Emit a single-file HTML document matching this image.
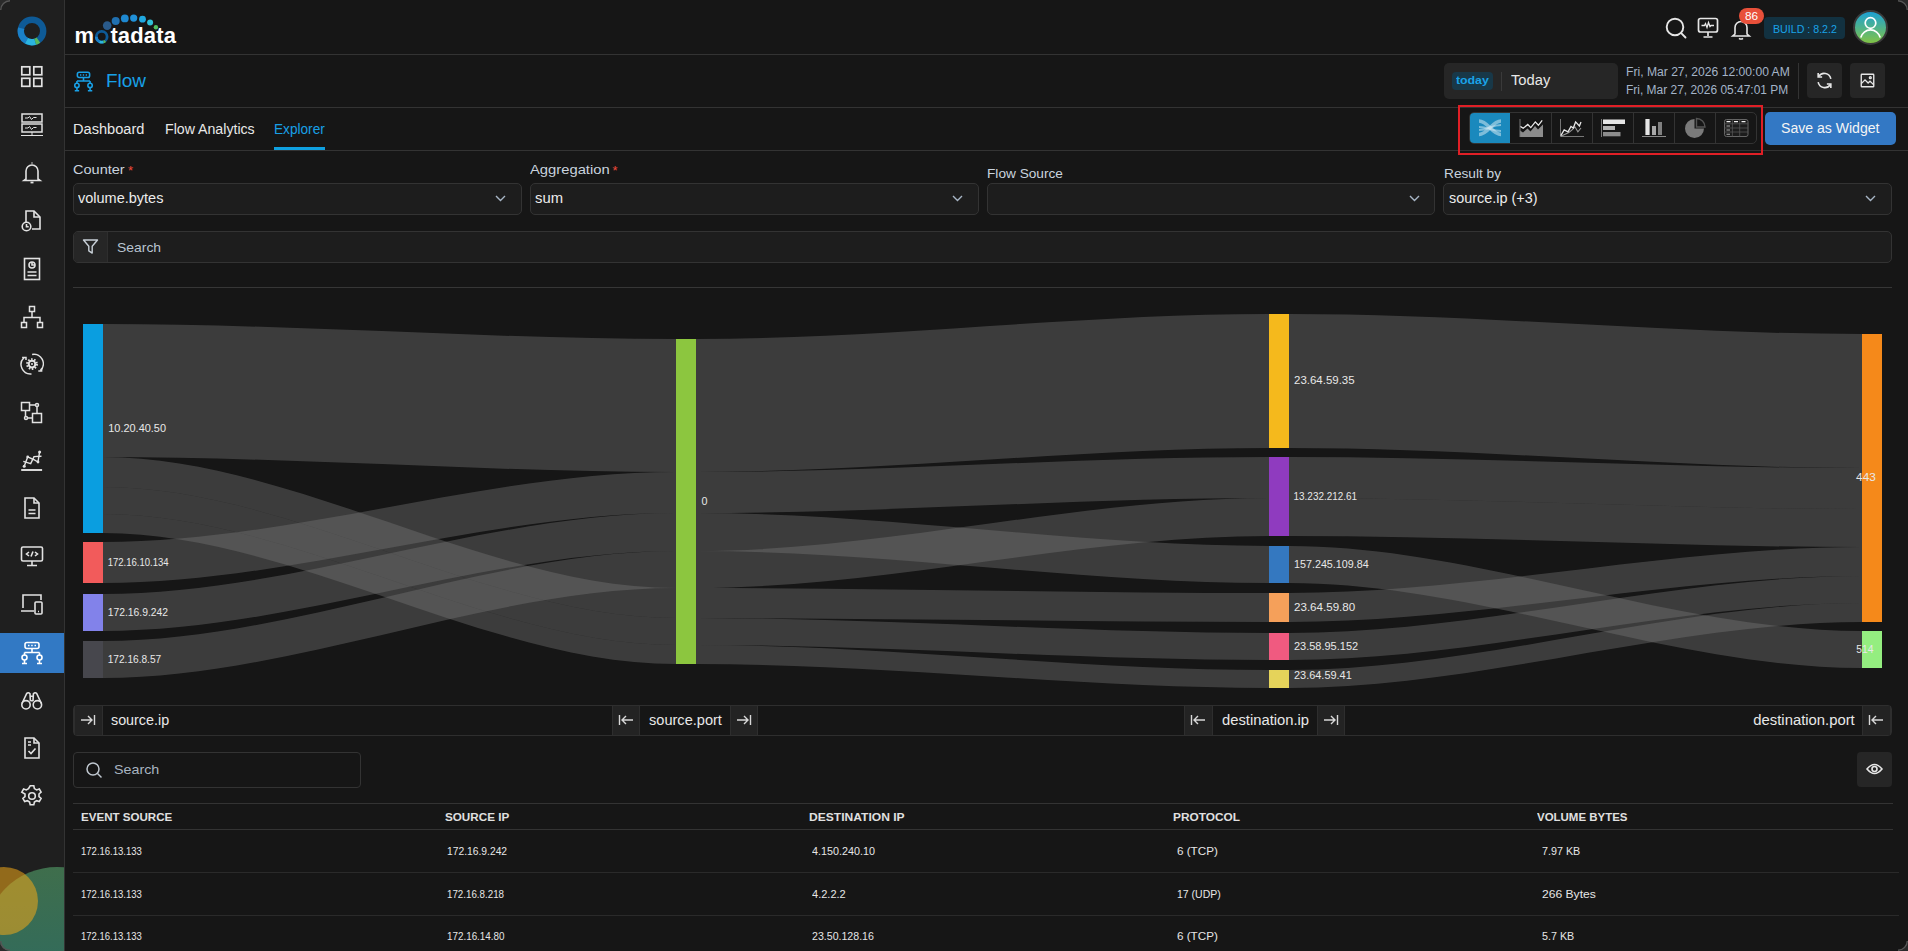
<!DOCTYPE html>
<html><head><meta charset="utf-8">
<style>
*{box-sizing:border-box;margin:0;padding:0}
html,body{width:1908px;height:951px;overflow:hidden;background:#161616;font-family:"Liberation Sans",sans-serif;color:#e4e4e4}
.a{position:absolute}
#side{left:0;top:0;width:65px;height:951px;background:#1f1f1f;border-right:1px solid #333;overflow:hidden}
.ic{position:absolute;left:20px;width:24px;height:24px}
.ic svg{width:24px;height:24px;display:block}
.t{position:absolute;white-space:nowrap;line-height:1}
</style></head><body>
<div id="side" class="a">
<svg class="a" style="left:17px;top:16px" width="30" height="30" viewBox="0 0 30 30">
<g fill="none" stroke-width="6.4">
<circle cx="15" cy="15" r="11.2" stroke="#0e5a96"/>
<path d="M4.2 12.2 A11.2 11.2 0 0 0 9.5 24.8" stroke="#1b80c8"/>
<path d="M9.5 24.8 A11.2 11.2 0 0 0 18.2 25.7" stroke="#2bb5e0"/>
<path d="M18.2 25.7 A11.2 11.2 0 0 0 21.4 24.2" stroke="#58b85c"/>
</g></svg>
<div class="ic" style="top:65px"><svg viewBox="0 0 24 24" fill="none" stroke="#e2e2e2" stroke-width="1.7"><rect x="1.8" y="1.8" width="8" height="8"/><rect x="13.8" y="1.8" width="8" height="8"/><rect x="1.8" y="13.3" width="8" height="8"/><rect x="13.8" y="13.3" width="8" height="8"/></svg></div>
<div class="ic" style="top:113px"><svg viewBox="0 0 24 24" fill="none" stroke="#e2e2e2" stroke-width="1.5"><rect x="2" y="1" width="20" height="8"/><rect x="2" y="11" width="20" height="8"/><path d="M12 19v3M1 22.5h22M5 5h3l1.5-1.5 2 3 2-2h3M5 15h3l1.5-1.5 2 3 2-2h3" stroke-width="1"/></svg></div>
<div class="ic" style="top:160px"><svg viewBox="0 0 24 24" fill="none" stroke="#e2e2e2" stroke-width="1.6"><path d="M12 2.5v1M6 19V11a6 6 0 0 1 12 0v8l2 1.5H4L6 19z"/><path d="M10.5 22.5h3" stroke-width="1.8"/></svg></div>
<div class="ic" style="top:208px"><svg viewBox="0 0 24 24" fill="none" stroke="#e2e2e2" stroke-width="1.6"><path d="M6 14V3h8l6 6v12h-8"/><path d="M14 3v6h6"/><circle cx="6.5" cy="18.5" r="4.3"/><path d="M6.5 16v2.8h2.2"/></svg></div>
<div class="ic" style="top:257px"><svg viewBox="0 0 24 24" fill="none" stroke="#e2e2e2" stroke-width="1.6"><rect x="4.5" y="1.5" width="15" height="21"/><circle cx="12" cy="8" r="3"/><path d="M12 5v3h3M7.5 15h9M7.5 18.5h9"/></svg></div>
<div class="ic" style="top:305px"><svg viewBox="0 0 24 24" fill="none" stroke="#e2e2e2" stroke-width="1.5"><rect x="9.5" y="1.5" width="5" height="5"/><rect x="1.5" y="17.5" width="5" height="5"/><rect x="17.5" y="17.5" width="5" height="5"/><path d="M12 6.5v6M4 17.5V12.5h16v5"/></svg></div>
<div class="ic" style="top:352px"><svg viewBox="0 0 24 24" fill="none" stroke="#e2e2e2"><circle cx="12" cy="12.1" r="4.9" stroke-width="2" stroke-dasharray="1.55 1.53"/><circle cx="12" cy="12.1" r="3.3" stroke-width="2"/><circle cx="12" cy="12.1" r="1" fill="#e2e2e2" stroke="none"/><path d="M11.5 21.9A9.5 9.5 0 0 1 3.9 5.7M12.1 2.4A9.5 9.5 0 0 1 20.4 18.6" stroke-width="1.5"/><path d="M2.1 5.5h3.9v2.4M18.3 19h3.3v-2.4" stroke-width="1.5"/></svg></div>
<div class="ic" style="top:401px"><svg viewBox="0 0 24 24" fill="none" stroke="#e2e2e2" stroke-width="1.5"><rect x="1.5" y="1.5" width="8" height="8"/><rect x="12.5" y="12.5" width="9" height="9"/><circle cx="17" cy="4" r="1.5"/><circle cx="6" cy="17" r="1.5"/><path d="M9.5 4h6M17 5.5v7M5.5 9.5v6M7.5 17h5"/></svg></div>
<div class="ic" style="top:448px"><svg viewBox="0 0 24 24" fill="none" stroke="#e2e2e2" stroke-width="1.4"><path d="M1.2 22h20.9" stroke-width="1.9"/><path d="M3.3 13.3l7.4 2.3 3.3-7 7.5-.3"/><path d="M4.2 18.3l3.5-9.4 5.8 2.6 4.5 2.5 1.6-10.1"/><g fill="#e2e2e2" stroke="none"><circle cx="4.2" cy="18.3" r="1.5"/><circle cx="7.7" cy="8.9" r="1.4"/><circle cx="18" cy="14" r="1.4"/><circle cx="19.6" cy="3.9" r="1.5"/></g></svg></div>
<div class="ic" style="top:496px"><svg viewBox="0 0 24 24" fill="none" stroke="#e2e2e2" stroke-width="1.6"><path d="M5 2h9l5 5v15H5z"/><path d="M14 2v5h5M8.5 14h7M8.5 17.5h7"/></svg></div>
<div class="ic" style="top:544px"><svg viewBox="0 0 24 24" fill="none" stroke="#e2e2e2" stroke-width="1.6"><rect x="1.5" y="3" width="21" height="14" rx="1.5"/><path d="M12 17v4M7 21.5h10M9 8l-2.5 2L9 12M15 8l2.5 2L15 12M13 7.5l-2 5"/></svg></div>
<div class="ic" style="top:592px"><svg viewBox="0 0 24 24" fill="none" stroke="#e2e2e2" stroke-width="1.6"><path d="M3 16V3h18v5M1 19h13"/><rect x="15" y="10" width="7" height="12" rx="1"/><path d="M18 19.5h1"/></svg></div>
<div class="a" style="left:0;top:633px;width:64px;height:40px;background:#3279c4"></div>
<div class="ic" style="top:641px"><svg viewBox="0 0 24 24" fill="none" stroke="#ffffff" stroke-width="1.6"><rect x="5" y="1.5" width="14" height="6" rx="2"/><path d="M8 4.5h1.5M11.2 4.5h1.5M14.5 4.5h1.5M12 7.5v4M4.5 11.5h15M4.5 11.5v3M19.5 11.5v3"/><circle cx="4.5" cy="16.5" r="2.5"/><circle cx="19.5" cy="16.5" r="2.5"/><path d="M4.5 19v3M2 22.5h5M19.5 19v3M17 22.5h5"/></svg></div>
<div class="ic" style="top:688px"><svg viewBox="0 0 24 24" fill="none" stroke="#e2e2e2" stroke-width="1.6"><circle cx="6" cy="16.8" r="4.2"/><circle cx="17.4" cy="16.8" r="4.2"/><path d="M2 15.5L6.6 5.6q1.6-1.8 3.4 0.2L10.4 13M21.4 15.5L16.8 5.6q-1.6-1.8-3.4 0.2L13 13M10.3 8.3h2.8M10.3 12.7h2.8"/></svg></div>
<div class="ic" style="top:736px"><svg viewBox="0 0 24 24" fill="none" stroke="#e2e2e2" stroke-width="1.6"><path d="M5 2h9l5 5v15H5z"/><path d="M14 2v5h5M8 6h3M8 9h3M8.5 15l2.5 2.5 4.5-5"/></svg></div>
<div class="ic" style="top:784px"><svg viewBox="0 0 24 24" fill="none" stroke="#e2e2e2" stroke-width="1.6"><circle cx="12" cy="12" r="3.3"/><path d="M10.2 1.8h3.6l.6 2.8 2.2 1.3 2.7-.9 1.8 3.1-2.1 1.9v2.6l2.1 1.9-1.8 3.1-2.7-.9-2.2 1.3-.6 2.8h-3.6l-.6-2.8-2.2-1.3-2.7.9-1.8-3.1 2.1-1.9v-2.6L1.8 8.1l1.8-3.1 2.7.9 2.2-1.3z"/></svg></div>
<svg class="a" style="left:0;top:840px" width="64" height="111" viewBox="0 0 64 111">
<defs><linearGradient id="gg" x1="0" y1="0" x2="0" y2="1"><stop offset="0" stop-color="#3f6e4c"/><stop offset="1" stop-color="#2c6a62"/></linearGradient></defs>
<circle cx="57" cy="100" r="73" fill="url(#gg)"/>
<circle cx="4" cy="61" r="34" fill="#f0a818" fill-opacity="0.55"/>
</svg>
</div>
<div class="a" style="left:65px;top:54px;width:1843px;height:1px;background:#333"></div>
<div class="a" style="left:65px;top:107px;width:1843px;height:1px;background:#333"></div>
<div class="a" style="left:65px;top:150px;width:1843px;height:1px;background:#333"></div>
<svg class="a" style="left:70px;top:8px" width="110" height="40" viewBox="70 8 110 40">
<circle cx="107.2" cy="25.6" r="4.3" fill="#2a5a8a"/><circle cx="115.7" cy="21" r="4" fill="#2070b0"/>
<circle cx="124.8" cy="18.4" r="3.9" fill="#1e88d0"/><circle cx="133.7" cy="18.1" r="3.6" fill="#2090d8"/>
<circle cx="142.5" cy="19.2" r="3.4" fill="#20a8e0"/><circle cx="150.1" cy="22.4" r="3.0" fill="#30c0d8"/>
<circle cx="155.9" cy="27.3" r="2.2" fill="#50c060"/>
<g fill="none" stroke-width="2.8"><circle cx="101.7" cy="36.8" r="5.4" stroke="#0e5a96"/>
<path d="M96.3 36.8 A5.4 5.4 0 0 0 99.5 41.7" stroke="#1b80c8"/><path d="M99.5 41.7 A5.4 5.4 0 0 0 103.5 41.9" stroke="#2bb5e0"/><path d="M103.5 41.9 A5.4 5.4 0 0 0 105.2 41" stroke="#58b85c"/></g>
</svg>
<div class="t" style="left:74.6px;top:24.68px;font-size:22px;color:#ffffff;font-weight:bold;transform:scaleY(1.03);transform-origin:0 85%">m</div>
<div class="t" style="left:110.4px;top:24.68px;font-size:22px;color:#ffffff;font-weight:bold;letter-spacing:0.15px;transform:scaleY(1.03);transform-origin:0 85%">tadata</div>
<svg class="a" style="left:1664px;top:16px" width="24" height="24" viewBox="0 0 24 24" fill="none" stroke="#e6e6e6" stroke-width="1.9"><circle cx="11" cy="11" r="8.3"/><path d="M17.2 17.2l4.3 4.3" stroke-linecap="round"/></svg>
<svg class="a" style="left:1697px;top:17px" width="24" height="22" viewBox="0 0 24 22" fill="none" stroke="#e6e6e6" stroke-width="1.7"><rect x="1.5" y="1.5" width="19" height="13.5" rx="2"/><path d="M11 15v4M6.5 20h9"/><path d="M4.5 8.5h3l1-2 1.5 4 1.5-5 1.5 4 1-1h3" stroke-width="1.3"/></svg>
<svg class="a" style="left:1729px;top:16px" width="24" height="24" viewBox="0 0 24 24" fill="none" stroke="#e6e6e6" stroke-width="1.6"><path d="M6 18V11.5a6 6 0 0 1 12 0V18l2.3 2H3.7z"/><path d="M10 22.3q2 1.5 4 0"/></svg>
<div class="a" style="left:1739px;top:8px;width:25px;height:16px;background:#e8503a;border-radius:8px"></div>
<div class="t" style="left:1744.6px;top:10.69px;font-size:11px;color:#ffffff;;transform-origin:0 0;transform:scaleX(1.0694)">86</div>
<div class="a" style="left:1764px;top:17px;width:81px;height:22px;background:#123140;border-radius:4px"></div>
<div class="t" style="left:1772.5px;top:23.99px;font-size:11px;color:#1aa3e8;;transform-origin:0 0;transform:scaleX(0.9675)">BUILD : 8.2.2</div>
<svg class="a" style="left:1853px;top:10px" width="35" height="35" viewBox="0 0 35 35"><defs><linearGradient id="av" x1="0" y1="0" x2="0" y2="1"><stop offset="0" stop-color="#1aa0d8"/><stop offset="1" stop-color="#84c441"/></linearGradient></defs>
<circle cx="17.5" cy="17.5" r="16.5" fill="url(#av)" stroke="#3a3a3a" stroke-width="2"/>
<g fill="none" stroke="#fff" stroke-width="1.7"><circle cx="17.5" cy="13" r="5.3"/><path d="M7.8 27.5a10 10 0 0 1 19.4 0"/></g></svg>
<svg class="a" style="left:73px;top:71px" width="21" height="21" viewBox="0 0 24 24" fill="none" stroke="#18a0e6" stroke-width="1.8"><rect x="5" y="1.5" width="14" height="6" rx="2"/><path d="M8 4.5h1.5M11.2 4.5h1.5M14.5 4.5h1.5M12 7.5v4M4.5 11.5h15M4.5 11.5v3M19.5 11.5v3"/><circle cx="4.5" cy="16.5" r="2.5"/><circle cx="19.5" cy="16.5" r="2.5"/><path d="M4.5 19v3M2 22.5h5M19.5 19v3M17 22.5h5"/></svg>
<div class="t" style="left:105.8px;top:72.24px;font-size:18.5px;color:#18a0e6;;transform-origin:0 0;transform:scaleX(1.0240)">Flow</div>
<div class="a" style="left:1444px;top:63px;width:174px;height:36px;background:#262626;border-radius:5px"></div>
<div class="a" style="left:1452px;top:72px;width:41px;height:18px;background:#183848;border-radius:4px"></div>
<div class="t" style="left:1455.5px;top:75.29px;font-size:11px;color:#1aa3e8;font-weight:bold;transform-origin:0 0;transform:scaleX(1.1178)">today</div>
<div class="a" style="left:1501px;top:72px;width:1px;height:19px;background:#3a3a3a"></div>
<div class="t" style="left:1510.5px;top:73.35px;font-size:14px;color:#e8e8e8;;transform-origin:0 0;transform:scaleX(1.0519)">Today</div>
<div class="t" style="left:1626.2px;top:65.74px;font-size:12px;color:#a4b4c8;;transform-origin:0 0;transform:scaleX(1.0105)">Fri, Mar 27, 2026 12:00:00 AM</div>
<div class="t" style="left:1626.2px;top:83.64px;font-size:12px;color:#a4b4c8;;transform-origin:0 0;transform:scaleX(0.9966)">Fri, Mar 27, 2026 05:47:01 PM</div>
<div class="a" style="left:1798px;top:63px;width:1px;height:36px;background:#333"></div>
<div class="a" style="left:1807px;top:63px;width:35px;height:35px;background:#262626;border-radius:4px"></div>
<svg class="a" style="left:1815px;top:71px" width="19" height="19" viewBox="0 0 24 24" fill="none" stroke="#e6e6e6" stroke-width="2"><path d="M20 10A8.5 8.5 0 0 0 4.5 7M4 14a8.5 8.5 0 0 0 15.5 3"/><path d="M4 2.5V7.5h5M20 21.5v-5h-5"/></svg>
<div class="a" style="left:1850px;top:63px;width:35px;height:35px;background:#262626;border-radius:4px"></div>
<svg class="a" style="left:1860px;top:73px" width="15" height="15" viewBox="0 0 24 24" fill="none" stroke="#e6e6e6" stroke-width="2.2"><rect x="2" y="2" width="20" height="20" rx="1"/><path d="M2 17l6-6 5 5 3-3 6 6"/><circle cx="16.5" cy="7.5" r="1.5"/></svg>
<div class="t" style="left:73px;top:122.45px;font-size:14px;color:#e8e8e8;;transform-origin:0 0;transform:scaleX(1.0423)">Dashboard</div>
<div class="t" style="left:164.6px;top:122.45px;font-size:14px;color:#e8e8e8;;transform-origin:0 0;transform:scaleX(1.0112)">Flow Analytics</div>
<div class="t" style="left:274.2px;top:122.45px;font-size:14px;color:#18a0e6;;transform-origin:0 0;transform:scaleX(0.9743)">Explorer</div>
<div class="a" style="left:274px;top:147px;width:51px;height:3px;background:#0fa0e0"></div>
<div class="a" style="left:1458px;top:105px;width:305px;height:50px;border:2px solid #e01f26"></div>
<div class="a" style="left:1469px;top:112px;width:288px;height:32px;border:1px solid #333;border-radius:5px;background:#161616"></div>
<div class="a" style="left:1470px;top:113px;width:40px;height:30px;background:#1a89bd;border-radius:4px 0 0 4px"></div>
<div class="a" style="left:1551px;top:113px;width:1px;height:30px;background:#333"></div>
<div class="a" style="left:1592px;top:113px;width:1px;height:30px;background:#333"></div>
<div class="a" style="left:1633px;top:113px;width:1px;height:30px;background:#333"></div>
<div class="a" style="left:1674px;top:113px;width:1px;height:30px;background:#333"></div>
<div class="a" style="left:1715px;top:113px;width:1px;height:30px;background:#333"></div>
<svg class="a" style="left:1470px;top:112px" width="287" height="32" viewBox="1470 112 287 32">
<g fill="none" stroke="#d0e8f2" stroke-opacity="0.55">
<path d="M1479 121c9 0 13 13.5 22 13.5" stroke-width="3.6"/><path d="M1479 134.5c9 0 13-13.5 22-13.5" stroke-width="3.6"/>
<path d="M1479 127c9 0 13 4 22 4" stroke-width="2"/><path d="M1479 130c9 0 13-5 22-5" stroke-width="2"/>
</g>
<path d="M1520 137V130.5l3 2 4.5-4 3 3 4.5-5.5 3 3.5 5-5V137z" fill="#8c8c8c"/>
<path d="M1520.2 126.4l3 1.9 4.6-3.8 3 3.1 4.5-5.7 3.1 3.4 3.8-4.9" fill="none" stroke="#111" stroke-width="3.2"/>
<path d="M1520.2 126.4l3 1.9 4.6-3.8 3 3.1 4.5-5.7 3.1 3.4 3.8-4.9" fill="none" stroke="#eaeaea" stroke-width="1.3"/>
<path d="M1520 119v18" stroke="#777" stroke-width="1"/>
<path d="M1560.5 119v17.5h23.5" fill="none" stroke="#777" stroke-width="1"/>
<path d="M1560.8 136.3l4.9-2.3 3.1-1.5 3-2.3 3.1-3.4 3 5 3.1-3.8" fill="none" stroke="#9a9a9a" stroke-width="1.1"/>
<path d="M1560.8 135.6l3.4-5.7 3.8 1.9 3-5.4 2.3 1.6 2.3-6.1 3.8 4.1 1.6-4.1" fill="none" stroke="#e8e8e8" stroke-width="1.3"/>
<path d="M1601.5 119v18" stroke="#777" stroke-width="1"/>
<rect x="1603" y="119.5" width="22" height="4.5" fill="#e6e6e6"/><rect x="1603" y="126" width="12" height="4" fill="#b4b4b4"/><rect x="1603" y="132" width="17.5" height="4.3" fill="#8c8c8c"/>
<rect x="1645.4" y="119" width="4.2" height="16" fill="#e6e6e6"/><rect x="1652" y="126" width="4" height="9" fill="#a8a8a8"/><rect x="1658" y="122" width="4" height="13" fill="#808080"/>
<path d="M1642 136.5h24" stroke="#8a8a8a" stroke-width="1"/>
<path d="M1694.5 119v9.5h9.5a9.5 9.5 0 1 1-9.5-9.5z" fill="#7a7a7a"/>
<path d="M1696.5 118.5a8.5 8.5 0 0 1 8.5 8.5h-8.5z" fill="#161616" stroke="#555" stroke-width="1.4"/>
<rect x="1724.5" y="119.5" width="23.5" height="17" rx="2" fill="#1c1c1c" stroke="#666" stroke-width="1"/>
<path d="M1724.5 123.8h23.5M1724.5 128h23.5M1724.5 132h23.5M1732.4 119.5v17M1739.7 119.5v17" stroke="#555" stroke-width="0.8"/>
<path d="M1726.5 121.6h4M1734 121.6h4M1741.5 121.6h4" stroke="#f0f0f0" stroke-width="1.3"/>
<path d="M1726.5 126h3.5M1726.5 130h3.5M1726.5 134.3h3.5" stroke="#aaa" stroke-width="1.1"/>
</svg>
<div class="a" style="left:1765px;top:112px;width:131px;height:33px;background:#3378c4;border-radius:5px"></div>
<div class="t" style="left:1781.4px;top:121.15px;font-size:14px;color:#f4f4f4;;transform-origin:0 0;transform:scaleX(1.0045)">Save as Widget</div>
<div class="t" style="left:73px;top:163.20px;font-size:13px;color:#c9d3de;;transform-origin:0 0;transform:scaleX(1.1178)">Counter</div>
<div class="t" style="left:128px;top:163.50px;font-size:13px;color:#f04a3a;">*</div>
<div class="a" style="left:73px;top:183px;width:449px;height:32px;background:#1d1d1d;border:1px solid #333;border-radius:5px"></div>
<div class="t" style="left:78px;top:191.45px;font-size:14px;color:#ececec;;transform-origin:0 0;transform:scaleX(1.0353)">volume.bytes</div>
<svg class="a" style="left:495px;top:195px" width="11" height="7" viewBox="0 0 11 7"><path d="M1 1l4.5 4.5L10 1" fill="none" stroke="#a8b6c6" stroke-width="1.4"/></svg>
<div class="t" style="left:530px;top:163.20px;font-size:13px;color:#c9d3de;;transform-origin:0 0;transform:scaleX(1.1365)">Aggregation</div>
<div class="t" style="left:612.5px;top:163.50px;font-size:13px;color:#f04a3a;">*</div>
<div class="a" style="left:530px;top:183px;width:449px;height:32px;background:#1d1d1d;border:1px solid #333;border-radius:5px"></div>
<div class="t" style="left:534.6px;top:191.45px;font-size:14px;color:#ececec;;transform-origin:0 0;transform:scaleX(1.0585)">sum</div>
<svg class="a" style="left:952px;top:195px" width="11" height="7" viewBox="0 0 11 7"><path d="M1 1l4.5 4.5L10 1" fill="none" stroke="#a8b6c6" stroke-width="1.4"/></svg>
<div class="t" style="left:986.6px;top:166.70px;font-size:13px;color:#c9d3de;;transform-origin:0 0;transform:scaleX(1.0505)">Flow Source</div>
<div class="a" style="left:987px;top:183px;width:448px;height:32px;background:#1d1d1d;border:1px solid #333;border-radius:5px"></div>
<svg class="a" style="left:1409px;top:195px" width="11" height="7" viewBox="0 0 11 7"><path d="M1 1l4.5 4.5L10 1" fill="none" stroke="#a8b6c6" stroke-width="1.4"/></svg>
<div class="t" style="left:1443.8px;top:166.70px;font-size:13px;color:#c9d3de;;transform-origin:0 0;transform:scaleX(1.0534)">Result by</div>
<div class="a" style="left:1443px;top:183px;width:449px;height:32px;background:#1d1d1d;border:1px solid #333;border-radius:5px"></div>
<div class="t" style="left:1448.5px;top:191.05px;font-size:14px;color:#ececec;;transform-origin:0 0;transform:scaleX(1.0293)">source.ip (+3)</div>
<svg class="a" style="left:1865px;top:195px" width="11" height="7" viewBox="0 0 11 7"><path d="M1 1l4.5 4.5L10 1" fill="none" stroke="#a8b6c6" stroke-width="1.4"/></svg>
<div class="a" style="left:73px;top:231px;width:1819px;height:32px;background:#1d1d1d;border:1px solid #333;border-radius:5px"></div>
<div class="a" style="left:74px;top:232px;width:34px;height:30px;background:#262626;border-right:1px solid #2e2e2e;border-radius:4px 0 0 4px"></div>
<svg class="a" style="left:82px;top:238px" width="17" height="17" viewBox="0 0 17 17"><path d="M1.5 2h14l-5.3 6.3v6.8l-3.4-2.3V8.3z" fill="none" stroke="#c8d0d8" stroke-width="1.4" stroke-linejoin="round"/></svg>
<div class="t" style="left:116.9px;top:241.20px;font-size:13px;color:#b8c4d0;;transform-origin:0 0;transform:scaleX(1.0703)">Search</div>
<div class="a" style="left:73px;top:287px;width:1819px;height:1px;background:#363636"></div>
<svg class="a" style="left:0;top:290px" width="1908" height="410" viewBox="0 290 1908 410">
<g fill="#7b7b7b" fill-opacity="0.385">
<path d="M103 324C292.1 324 486.9 339 676 339L676 472C486.9 472 292.1 457 103 457Z"/>
<path d="M103 457C292.1 457 486.9 588 676 588L676 618C486.9 618 292.1 487 103 487Z"/>
<path d="M103 487C292.1 487 486.9 618 676 618L676 645C486.9 645 292.1 514 103 514Z"/>
<path d="M103 514C292.1 514 486.9 645 676 645L676 664C486.9 664 292.1 533 103 533Z"/>
<path d="M103 542C292.1 542 486.9 472 676 472L676 513C486.9 513 292.1 583 103 583Z"/>
<path d="M103 594C292.1 594 486.9 513 676 513L676 551C486.9 551 292.1 631 103 631Z"/>
<path d="M103 641C292.1 641 486.9 551 676 551L676 588C486.9 588 292.1 678 103 678Z"/>
<path d="M696 339C885.1 339 1079.9 314 1269 314L1269 448C1079.9 448 885.1 472 696 472Z"/>
<path d="M696 472C885.1 472 1079.9 457 1269 457L1269 498C1079.9 498 885.1 513 696 513Z"/>
<path d="M696 513C885.1 513 1079.9 546 1269 546L1269 583C1079.9 583 885.1 551 696 551Z"/>
<path d="M696 551C885.1 551 1079.9 498 1269 498L1269 536C1079.9 536 885.1 588 696 588Z"/>
<path d="M696 588C885.1 588 1079.9 593 1269 593L1269 622C1079.9 622 885.1 618 696 618Z"/>
<path d="M696 618C885.1 618 1079.9 633 1269 633L1269 660C1079.9 660 885.1 645 696 645Z"/>
<path d="M696 645C885.1 645 1079.9 670 1269 670L1269 688C1079.9 688 885.1 664 696 664Z"/>
<path d="M1289 314C1478.1 314 1672.9 334 1862 334L1862 468C1672.9 468 1478.1 448 1289 448Z"/>
<path d="M1289 457C1478.1 457 1672.9 468 1862 468L1862 509C1672.9 509 1478.1 498 1289 498Z"/>
<path d="M1289 498C1478.1 498 1672.9 509 1862 509L1862 547C1672.9 547 1478.1 536 1289 536Z"/>
<path d="M1289 546C1478.1 546 1672.9 631 1862 631L1862 668C1672.9 668 1478.1 583 1289 583Z"/>
<path d="M1289 593C1478.1 593 1672.9 547 1862 547L1862 576C1672.9 576 1478.1 622 1289 622Z"/>
<path d="M1289 633C1478.1 633 1672.9 576 1862 576L1862 603C1672.9 603 1478.1 660 1289 660Z"/>
<path d="M1289 670C1478.1 670 1672.9 603 1862 603L1862 622C1672.9 622 1478.1 688 1289 688Z"/>
</g>
<rect x="83" y="324" width="20" height="209" fill="#0a9ee0"/>
<rect x="83" y="542" width="20" height="41" fill="#f25b5b"/>
<rect x="83" y="594" width="20" height="37" fill="#8282ea"/>
<rect x="83" y="641" width="20" height="37" fill="#47474d"/>
<rect x="676" y="339" width="20" height="325" fill="#8cc63f"/>
<rect x="1269" y="314" width="20" height="134" fill="#f5b91c"/>
<rect x="1269" y="457" width="20" height="79" fill="#8f3bbf"/>
<rect x="1269" y="546" width="20" height="37" fill="#3478c0"/>
<rect x="1269" y="593" width="20" height="29" fill="#f5a05a"/>
<rect x="1269" y="633" width="20" height="27" fill="#f05a80"/>
<rect x="1269" y="670" width="20" height="18" fill="#e5d35a"/>
<rect x="1862" y="334" width="20" height="288" fill="#f5891a"/>
<rect x="1862" y="631" width="20" height="37" fill="#94ee80"/>
<g font-family="Liberation Sans" font-size="11" fill="#e8e8e8">
<text x="108.3" y="432.2" textLength="57.7" lengthAdjust="spacingAndGlyphs">10.20.40.50</text>
<text x="107.7" y="566.4" textLength="61" lengthAdjust="spacingAndGlyphs">172.16.10.134</text>
<text x="107.7" y="616" textLength="60.3" lengthAdjust="spacingAndGlyphs">172.16.9.242</text>
<text x="107.7" y="663" textLength="53.5" lengthAdjust="spacingAndGlyphs">172.16.8.57</text>
<text x="701.5" y="505.3" textLength="6" lengthAdjust="spacingAndGlyphs">0</text>
<text x="1294" y="384" textLength="60.6" lengthAdjust="spacingAndGlyphs">23.64.59.35</text>
<text x="1293.6" y="500" textLength="63.4" lengthAdjust="spacingAndGlyphs">13.232.212.61</text>
<text x="1294" y="567.7" textLength="74.7" lengthAdjust="spacingAndGlyphs">157.245.109.84</text>
<text x="1294" y="610.8" textLength="61.2" lengthAdjust="spacingAndGlyphs">23.64.59.80</text>
<text x="1294" y="649.7" textLength="64.1" lengthAdjust="spacingAndGlyphs">23.58.95.152</text>
<text x="1294" y="679.1" textLength="57.8" lengthAdjust="spacingAndGlyphs">23.64.59.41</text>
<text x="1856.1" y="480.6" textLength="19.8" lengthAdjust="spacingAndGlyphs">443</text>
<text x="1856.2" y="652.8" textLength="17.2" lengthAdjust="spacingAndGlyphs">514</text>
</g></svg>
<div class="a" style="left:73px;top:705px;width:1819px;height:31px;border:1px solid #2e2e2e;border-radius:4px;background:#161616"></div>
<div class="a" style="left:74px;top:706px;width:29px;height:29px;background:#232323;border-left:1px solid #2e2e2e;border-right:1px solid #2e2e2e"></div>
<svg class="a" style="left:80px;top:713px" width="16" height="14" viewBox="0 0 16 14"><path d="M1 7h11M8 3l4 4-4 4M14.5 2v10" fill="none" stroke="#d8d8d8" stroke-width="1.4"/></svg>
<div class="t" style="left:110.6px;top:713.05px;font-size:14px;color:#e8e8e8;;transform-origin:0 0;transform:scaleX(1.0227)">source.ip</div>
<div class="a" style="left:612px;top:706px;width:28px;height:29px;background:#232323;border-left:1px solid #2e2e2e;border-right:1px solid #2e2e2e"></div>
<svg class="a" style="left:618px;top:713px" width="16" height="14" viewBox="0 0 16 14"><path d="M4 7h11M8 3L4 7l4 4M1.5 2v10" fill="none" stroke="#d8d8d8" stroke-width="1.4"/></svg>
<div class="t" style="left:649px;top:713.05px;font-size:14px;color:#e8e8e8;;transform-origin:0 0;transform:scaleX(1.0407)">source.port</div>
<div class="a" style="left:730px;top:706px;width:28px;height:29px;background:#232323;border-left:1px solid #2e2e2e;border-right:1px solid #2e2e2e"></div>
<svg class="a" style="left:736px;top:713px" width="16" height="14" viewBox="0 0 16 14"><path d="M1 7h11M8 3l4 4-4 4M14.5 2v10" fill="none" stroke="#d8d8d8" stroke-width="1.4"/></svg>
<div class="a" style="left:1184px;top:706px;width:29px;height:29px;background:#232323;border-left:1px solid #2e2e2e;border-right:1px solid #2e2e2e"></div>
<svg class="a" style="left:1190px;top:713px" width="16" height="14" viewBox="0 0 16 14"><path d="M4 7h11M8 3L4 7l4 4M1.5 2v10" fill="none" stroke="#d8d8d8" stroke-width="1.4"/></svg>
<div class="t" style="left:1221.7px;top:713.05px;font-size:14px;color:#e8e8e8;;transform-origin:0 0;transform:scaleX(1.0556)">destination.ip</div>
<div class="a" style="left:1317px;top:706px;width:28px;height:29px;background:#232323;border-left:1px solid #2e2e2e;border-right:1px solid #2e2e2e"></div>
<svg class="a" style="left:1323px;top:713px" width="16" height="14" viewBox="0 0 16 14"><path d="M1 7h11M8 3l4 4-4 4M14.5 2v10" fill="none" stroke="#d8d8d8" stroke-width="1.4"/></svg>
<div class="t" style="right:53.200000000000045px;top:713.25px;font-size:14px;color:#e8e8e8;;transform-origin:100% 0;transform:scaleX(1.0592)">destination.port</div>
<div class="a" style="left:1862px;top:706px;width:29px;height:29px;background:#232323;border-left:1px solid #2e2e2e;border-right:1px solid #2e2e2e"></div>
<svg class="a" style="left:1868px;top:713px" width="16" height="14" viewBox="0 0 16 14"><path d="M4 7h11M8 3L4 7l4 4M1.5 2v10" fill="none" stroke="#d8d8d8" stroke-width="1.4"/></svg>
<div class="a" style="left:73px;top:752px;width:288px;height:36px;border:1px solid #333;border-radius:4px;background:#161616"></div>
<svg class="a" style="left:85px;top:761px" width="18" height="18" viewBox="0 0 18 18" fill="none" stroke="#c0c8d0" stroke-width="1.5"><circle cx="8" cy="8" r="6"/><path d="M12.5 12.5l4 4"/></svg>
<div class="t" style="left:114px;top:762.80px;font-size:13px;color:#a8b4c0;;transform-origin:0 0;transform:scaleX(1.0994)">Search</div>
<div class="a" style="left:1857px;top:752px;width:35px;height:35px;background:#262626;border-radius:4px"></div>
<svg class="a" style="left:1866px;top:762px" width="17" height="14" viewBox="0 0 17 14" fill="none" stroke="#e6e6e6" stroke-width="1.6"><path d="M1 7q7.5-9 15 0q-7.5 9-15 0z"/><circle cx="8.5" cy="7" r="2.5"/></svg>
<div class="a" style="left:73px;top:803px;width:1820px;height:1px;background:#333"></div>
<div class="a" style="left:73px;top:829px;width:1820px;height:1px;background:#333"></div>
<div class="a" style="left:73px;top:872px;width:1826px;height:1px;background:#2a2a2a"></div>
<div class="a" style="left:73px;top:915px;width:1826px;height:1px;background:#2a2a2a"></div>
<div class="t" style="left:81px;top:811.08px;font-size:11.6px;color:#e0e0e0;font-weight:bold;transform-origin:0 0;transform:scaleX(0.9969)">EVENT SOURCE</div>
<div class="t" style="left:445px;top:811.08px;font-size:11.6px;color:#e0e0e0;font-weight:bold;transform-origin:0 0;transform:scaleX(1.0066)">SOURCE IP</div>
<div class="t" style="left:809px;top:811.08px;font-size:11.6px;color:#e0e0e0;font-weight:bold;transform-origin:0 0;transform:scaleX(1.0402)">DESTINATION IP</div>
<div class="t" style="left:1173px;top:811.08px;font-size:11.6px;color:#e0e0e0;font-weight:bold;transform-origin:0 0;transform:scaleX(1.0214)">PROTOCOL</div>
<div class="t" style="left:1537px;top:811.08px;font-size:11.6px;color:#e0e0e0;font-weight:bold;transform-origin:0 0;transform:scaleX(0.9892)">VOLUME BYTES</div>
<div class="t" style="left:81px;top:845.99px;font-size:11px;color:#e6e6e6;;transform-origin:0 0;transform:scaleX(0.8656)">172.16.13.133</div>
<div class="t" style="left:447px;top:845.99px;font-size:11px;color:#e6e6e6;;transform-origin:0 0;transform:scaleX(0.9356)">172.16.9.242</div>
<div class="t" style="left:811.6px;top:845.99px;font-size:11px;color:#e6e6e6;;transform-origin:0 0;transform:scaleX(0.9792)">4.150.240.10</div>
<div class="t" style="left:1177.4px;top:845.99px;font-size:11px;color:#e6e6e6;;transform-origin:0 0;transform:scaleX(1.0597)">6 (TCP)</div>
<div class="t" style="left:1542.2px;top:845.99px;font-size:11px;color:#e6e6e6;;transform-origin:0 0;transform:scaleX(0.9785)">7.97 KB</div>
<div class="t" style="left:81px;top:889.09px;font-size:11px;color:#e6e6e6;;transform-origin:0 0;transform:scaleX(0.8656)">172.16.13.133</div>
<div class="t" style="left:447px;top:889.09px;font-size:11px;color:#e6e6e6;;transform-origin:0 0;transform:scaleX(0.8874)">172.16.8.218</div>
<div class="t" style="left:811.6px;top:889.09px;font-size:11px;color:#e6e6e6;;transform-origin:0 0;transform:scaleX(1.0018)">4.2.2.2</div>
<div class="t" style="left:1177.4px;top:889.09px;font-size:11px;color:#e6e6e6;;transform-origin:0 0;transform:scaleX(0.9554)">17 (UDP)</div>
<div class="t" style="left:1542.2px;top:889.09px;font-size:11px;color:#e6e6e6;;transform-origin:0 0;transform:scaleX(1.0997)">266 Bytes</div>
<div class="t" style="left:81px;top:931.19px;font-size:11px;color:#e6e6e6;;transform-origin:0 0;transform:scaleX(0.8656)">172.16.13.133</div>
<div class="t" style="left:447px;top:931.19px;font-size:11px;color:#e6e6e6;;transform-origin:0 0;transform:scaleX(0.8952)">172.16.14.80</div>
<div class="t" style="left:811.6px;top:931.19px;font-size:11px;color:#e6e6e6;;transform-origin:0 0;transform:scaleX(0.9637)">23.50.128.16</div>
<div class="t" style="left:1177.4px;top:931.19px;font-size:11px;color:#e6e6e6;;transform-origin:0 0;transform:scaleX(1.0597)">6 (TCP)</div>
<div class="t" style="left:1542.2px;top:931.19px;font-size:11px;color:#e6e6e6;;transform-origin:0 0;transform:scaleX(0.9748)">5.7 KB</div>
<svg class="a" style="left:0;top:0" width="12" height="12"><path d="M0 0H10A10 10 0 0 0 0 10Z" fill="#2a2a2a"/><path d="M10 0.7A9.3 9.3 0 0 0 0.7 10" fill="none" stroke="#555" stroke-width="1.4"/></svg>
<svg class="a" style="right:0;top:0" width="12" height="12" viewBox="0 0 12 12"><g transform="translate(12,0) scale(-1,1)"><path d="M0 0H10A10 10 0 0 0 0 10Z" fill="#2a2a2a"/><path d="M10 0.7A9.3 9.3 0 0 0 0.7 10" fill="none" stroke="#555" stroke-width="1.4"/></g></svg>
<svg class="a" style="left:0;bottom:0" width="12" height="12" viewBox="0 0 12 12"><g transform="translate(0,12) scale(1,-1)"><path d="M0 0H10A10 10 0 0 0 0 10Z" fill="#2a2a2a"/><path d="M10 0.7A9.3 9.3 0 0 0 0.7 10" fill="none" stroke="#555" stroke-width="1.4"/></g></svg>
<svg class="a" style="right:0;bottom:0" width="12" height="12" viewBox="0 0 12 12"><g transform="translate(12,12) scale(-1,-1)"><path d="M0 0H10A10 10 0 0 0 0 10Z" fill="#2a2a2a"/><path d="M10 0.7A9.3 9.3 0 0 0 0.7 10" fill="none" stroke="#555" stroke-width="1.4"/></g></svg>
</body></html>
